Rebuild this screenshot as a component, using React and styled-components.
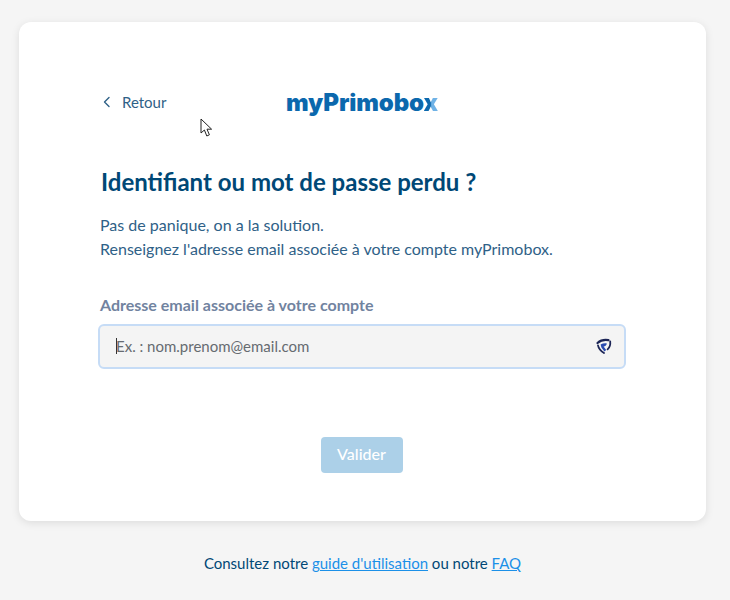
import { createGlobalStyle } from "styled-components";
import styled from "styled-components";

const GlobalStyle = createGlobalStyle`
    html, body {
        margin: 0;
        padding: 0;
        background: #f5f5f5;
        font-family: 'Lato', sans-serif;
    }
`;

export default function App() {
    return (
        <>
            <GlobalStyle />
            <Page>
                <Card>
                    <Header>
                        <BackLink>
                            <svg width="10" height="12" viewBox="0 0 10 12" fill="none">
                                <path d="M7 1.5L2.5 6L7 10.5" stroke="#2f6187" strokeWidth="1.4" strokeLinecap="round" strokeLinejoin="round" />
                            </svg>
                            Retour
                        </BackLink>
                        <Logo>myPrimobo<LogoX>x</LogoX></Logo>
                    </Header>
                    <Title>Identifiant ou mot de passe perdu ?</Title>
                    <Intro>
                        Pas de panique, on a la solution.<br />
                        Renseignez l'adresse email associée à votre compte myPrimobox.
                    </Intro>
                    <Label>Adresse email associée à votre compte</Label>
                    <InputBox>
                        <Caret />
                        <Placeholder>Ex. : nom.prenom@email.com</Placeholder>
                        <svg width="16" height="16" viewBox="0 0 16 16" fill="none">
                            <path d="M1.5 5C4.5 2.4 9 1.6 12.4 2.2" stroke="#1c2556" strokeWidth="2.2" strokeLinecap="round" />
                            <path d="M14.2 3.4C14.6 7 13.6 9.6 11.6 11.4" stroke="#1c2556" strokeWidth="1.8" strokeLinecap="round" />
                            <path d="M2 7.4C2.6 10.6 4.6 13 8 15" stroke="#1c2556" strokeWidth="1.8" strokeLinecap="round" />
                            <path d="M4.6 6.6C6.6 5.4 8.8 5 10.8 5.4C10.8 7 9.4 8.2 7.6 8.6L10.2 12L8.4 13.4L5.4 9.4Z" fill="#2a4bb0" />
                        </svg>
                    </InputBox>
                    <Actions>
                        <SubmitButton>Valider</SubmitButton>
                    </Actions>
                </Card>
                <Footer>
                    Consultez notre <FooterLink>guide d'utilisation</FooterLink> ou notre <FooterLink>FAQ</FooterLink>
                </Footer>
                <Cursor width="15" height="20" viewBox="0 0 15 20">
                    <path d="M1 1V15L4.4 12L6.8 18L9.4 16.8L7 11.2H11.6Z" fill="#fff" stroke="#222" strokeWidth="1" strokeLinejoin="miter" />
                </Cursor>
            </Page>
        </>
    );
}

const Page = styled.div`
    position: relative;
    width: 730px;
    height: 600px;
    box-sizing: border-box;
    padding: 22px 24px 0 19px;
    overflow: hidden;
`;

const Card = styled.div`
    height: 499px;
    box-sizing: border-box;
    padding: 63px 80px 0 80px;
    background: #fff;
    border-radius: 12px;
    box-shadow: 0 2px 8px rgba(0, 0, 0, 0.1);
`;

const Header = styled.div`
    display: flex;
    align-items: center;
    height: 34px;
    padding-left: 3px;
`;

const BackLink = styled.div`
    display: flex;
    align-items: center;
    gap: 10px;
    width: 184px;
    font-size: 15px;
    color: #2f6187;
`;

const Logo = styled.div`
    font-family: 'Inter', sans-serif;
    font-size: 24px;
    font-weight: 900;
    letter-spacing: -0.1px;
    color: #0b68ad;
`;

const LogoX = styled.span`
    background: linear-gradient(90deg, #0b68ad 45%, #6fb2e6 55%);
    background-clip: text;
    -webkit-background-clip: text;
    color: transparent;
`;

const Title = styled.h1`
    margin: 47px 0 0 2px;
    font-size: 24px;
    line-height: 32px;
    font-weight: 700;
    color: #004876;
`;

const Intro = styled.p`
    margin: 15px 0 0 1px;
    font-size: 16px;
    line-height: 24px;
    color: #2f6187;
`;

const Label = styled.div`
    margin: 32px 0 0 1px;
    font-size: 16px;
    line-height: 24px;
    font-weight: 700;
    color: #71839f;
`;

const InputBox = styled.div`
    display: flex;
    align-items: center;
    height: 45px;
    box-sizing: border-box;
    margin-top: 7px;
    margin-left: -1px;
    padding: 0 12px 2px 16px;
    background: #f4f4f4;
    border: 2px solid #c6dcf6;
    border-radius: 6px;
`;

const Caret = styled.span`
    width: 1px;
    height: 16px;
    margin-right: -1px;
    background: #333;
`;

const Placeholder = styled.span`
    flex: 1;
    font-size: 15px;
    color: #666b70;
`;

const Actions = styled.div`
    display: flex;
    justify-content: center;
    margin-top: 68px;
    padding-right: 2px;
`;

const SubmitButton = styled.button`
    width: 82px;
    height: 36px;
    padding: 0 0 3px;
    border: none;
    border-radius: 4px;
    background: #acd0e8;
    font-family: 'Lato', sans-serif;
    font-size: 16px;
    font-weight: 500;
    color: #fff;
`;

const Footer = styled.div`
    margin-top: 31px;
    text-align: center;
    font-size: 15px;
    line-height: 22px;
    color: #004876;
`;

const FooterLink = styled.a`
    color: #1b90e8;
    text-decoration: underline;
`;

const Cursor = styled.svg`
    position: absolute;
    left: 200px;
    top: 118px;
`;
